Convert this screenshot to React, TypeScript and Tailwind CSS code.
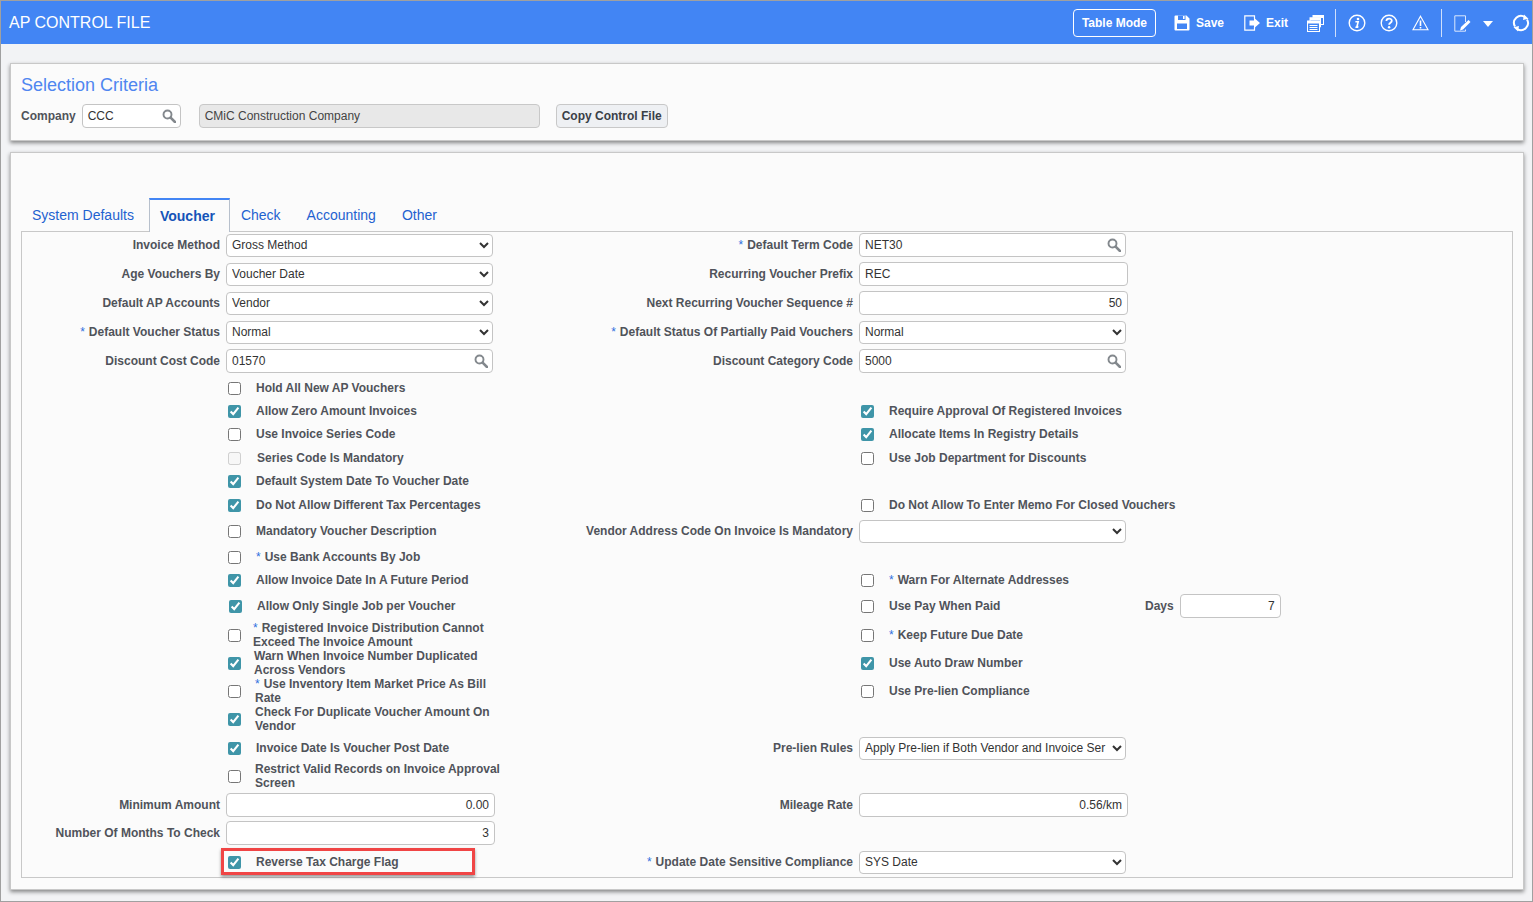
import React from "react";

const font = "font-['Liberation_Sans',Arial,sans-serif]";

function SearchIcon() {
  return (
    <svg width="14" height="14" viewBox="0 0 14 14" className="shrink-0">
      <circle cx="5.5" cy="5.5" r="4" fill="none" stroke="#83888d" strokeWidth="1.9" />
      <path d="M8.6 8.6 L13 13" stroke="#83888d" strokeWidth="2.6" strokeLinecap="round" />
    </svg>
  );
}

function Req() {
  return <span className="mr-[4px] font-normal text-[#2f6fde]">*</span>;
}

function Label({ text, req, w = "w-auto" }: { text: string; req?: boolean; w?: string }) {
  return (
    <label className={`${w} text-right font-bold text-[12px] leading-[14px] text-[#50535a] whitespace-nowrap`}>
      {req && <Req />}
      {text}
    </label>
  );
}

function Sel({ value, w = "w-[267px]" }: { value: string; w?: string }) {
  return (
    <select
      defaultValue={value}
      className={`${w} h-[23px] shrink-0 border border-[#c4c4c4] rounded-[4px] bg-white pl-[1px] pr-0 text-[12px] text-[#333]`}
    >
      <option value={value}>{value}</option>
    </select>
  );
}

function Text({ value, w = "w-[269px]", right, search }: { value: string; w?: string; right?: boolean; search?: boolean }) {
  return (
    <div className={`${w} h-[24px] shrink-0 flex items-center justify-between border border-[#c4c4c4] rounded-[4px] bg-white pl-[5px] ${search ? "pr-[4px]" : "pr-[5px]"} text-[12px] text-[#333]`}>
      <span className={right ? "w-full text-right" : ""}>{value}</span>
      {search && <SearchIcon />}
    </div>
  );
}

function Check({ checked, disabled, label, req, ml = "ml-[15px]", w, box = "" }: { checked?: boolean; disabled?: boolean; label: string; req?: boolean; ml?: string; w?: string; box?: string }) {
  return (
    <div className="flex items-center">
      <input
        type="checkbox"
        defaultChecked={checked}
        disabled={disabled}
        className={`mt-[2px] mb-0 mr-0 w-[13px] h-[13px] shrink-0 accent-[#3f95a8] ${box || "ml-0"}`}
      />
      <span className={`${ml} ${w ?? "whitespace-nowrap"} font-bold text-[12px] leading-[14px] text-[#50535a]`}>
        {req && <Req />}
        {label}
      </span>
    </div>
  );
}

function LeftField({ label, req, children }: { label: string; req?: boolean; children: React.ReactNode }) {
  return (
    <div className="flex items-center h-[23px]">
      <div className="w-[198px] flex justify-end">
        <Label text={label} req={req} />
      </div>
      <div className="ml-[6px]">{children}</div>
    </div>
  );
}

function RightField({ label, req, children }: { label: string; req?: boolean; children: React.ReactNode }) {
  return (
    <div className="flex items-center h-[23px]">
      <div className="w-[348px] flex justify-end">
        <Label text={label} req={req} />
      </div>
      <div className="ml-[6px]">{children}</div>
    </div>
  );
}

function LeftCheck(props: React.ComponentProps<typeof Check>) {
  return (
    <div className="h-[23px] flex items-center pl-[206px]">
      <Check {...props} />
    </div>
  );
}

function RightCheck(props: React.ComponentProps<typeof Check>) {
  return (
    <div className="h-[23px] flex items-center pl-[356px]">
      <Check {...props} />
    </div>
  );
}

function Row({ h, left, right }: { h: string; left?: React.ReactNode; right?: React.ReactNode }) {
  return (
    <div className={`${h} grid grid-cols-[483px_1fr]`}>
      <div>{left}</div>
      <div>{right}</div>
    </div>
  );
}

function ToolbarIcons() {
  return (
    <div className="flex items-center h-full pt-[1px]">
      <button className="h-[28px] w-[83px] border border-white rounded-[4px] text-white font-bold text-[12px]">Table Mode</button>
      {/* save */}
      <svg width="16" height="16" viewBox="0 0 16 16" className="ml-[18px]">
        <path d="M0.5 1.5 a1 1 0 0 1 1-1 H12.5 L15.5 3.5 V14.5 a1 1 0 0 1-1 1 H1.5 a1 1 0 0 1-1-1 Z" fill="white" />
        <rect x="4" y="0.5" width="7.5" height="4.5" fill="#4285f4" />
        <rect x="9" y="1" width="1.6" height="3" fill="white" />
        <rect x="3" y="8.5" width="10" height="5.5" fill="#4285f4" />
      </svg>
      <span className="ml-[6px] text-white font-bold text-[12px]">Save</span>
      {/* exit */}
      <svg width="17" height="16" viewBox="0 0 17 16" className="ml-[20px]">
        <path d="M10.5 4 V0.8 H0.8 V15.2 H10.5 V12" fill="none" stroke="white" strokeWidth="1.2" />
        <path d="M5.5 5.5 H10 V2.8 L16 8 L10 13.2 V10.5 H5.5 Z" fill="white" />
      </svg>
      <span className="ml-[5px] text-white font-bold text-[12px]">Exit</span>
      {/* stacked documents */}
      <svg width="17" height="17" viewBox="0 0 17 17" className="ml-[19px]">
        <rect x="6" y="0.5" width="10.5" height="9" fill="#4285f4" stroke="white" />
        <rect x="6" y="0.5" width="10.5" height="2.5" fill="white" />
        <rect x="3" y="2.8" width="10.5" height="9" fill="#4285f4" stroke="white" />
        <rect x="3" y="2.8" width="10.5" height="2.5" fill="white" />
        <rect x="0.5" y="6" width="12" height="10.5" fill="#4285f4" stroke="white" />
        <rect x="0.5" y="6" width="12" height="2.5" fill="white" />
        <path d="M2.5 10.5 H10.5 M2.5 12.5 H10.5 M2.5 14.5 H10.5" stroke="white" />
      </svg>
      <div className="ml-[11px] w-px h-[28px] bg-[#cfdffb]" />
      {/* info */}
      <svg width="18" height="18" viewBox="0 0 18 18" className="ml-[12px]">
        <circle cx="9" cy="9" r="7.8" fill="none" stroke="white" strokeWidth="1.4" />
        <circle cx="10" cy="5" r="1.3" fill="white" />
        <path d="M7.4 7.8 H10.2 L8.9 12.6 H10.4 M7.4 13.2 H10.2" fill="none" stroke="white" strokeWidth="1.6" />
      </svg>
      {/* help */}
      <svg width="18" height="18" viewBox="0 0 18 18" className="ml-[14px]">
        <circle cx="9" cy="9" r="7.8" fill="none" stroke="white" strokeWidth="1.4" />
        <path d="M6.4 7 C6.4 3.8 11.8 3.8 11.8 6.8 C11.8 8.8 9.1 8.6 9.1 10.8" fill="none" stroke="white" strokeWidth="1.8" />
        <circle cx="9.1" cy="13.2" r="1.2" fill="white" />
      </svg>
      {/* warning */}
      <svg width="17" height="16" viewBox="0 0 17 16" className="ml-[14px]">
        <path d="M8.5 1.2 L16 14.8 H1 Z" fill="none" stroke="white" strokeWidth="1.1" />
        <path d="M8.5 5.5 V11 M8.5 12 V13.6" stroke="white" strokeWidth="1.6" />
      </svg>
      <div className="ml-[12px] w-px h-[28px] bg-[#cfdffb]" />
      {/* edit doc */}
      <svg width="17" height="17" viewBox="0 0 17 17" className="ml-[12px]">
        <path d="M11.5 7 V0.8 H0.8 V16.2 H11.5 V14.5" fill="none" stroke="#dbe7fd" strokeWidth="1" />
        <path d="M6 15.5 L7 12 L14.5 5 L16.5 7 L9 14.5 Z" fill="white" />
      </svg>
      {/* caret */}
      <svg width="10" height="6" viewBox="0 0 10 6" className="ml-[12px] mt-[2px]">
        <path d="M0 0 H10 L5 6 Z" fill="white" />
      </svg>
      {/* refresh */}
      <svg width="18" height="18" viewBox="0 0 18 18" className="ml-[19px]">
        <path d="M3 12.5 A7 7 0 0 1 13 3.2" fill="none" stroke="white" strokeWidth="2" />
        <path d="M15 5.5 A7 7 0 0 1 5 14.8" fill="none" stroke="white" strokeWidth="2" />
        <path d="M12 0.5 L16.5 4.8 L11 6 Z" fill="white" />
        <path d="M6 17.5 L1.5 13.2 L7 12 Z" fill="white" />
      </svg>
    </div>
  );
}

export default function App() {
  return (
    <div className={`${font} w-[1533px] h-[902px] overflow-hidden bg-[#f2f3f5] border border-[#a0a0a0]`}>
      <header className="h-[43px] bg-[#4285f4] flex items-center justify-between pl-[8px] pr-[2px]">
        <h1 className="text-white text-[16px] leading-[42px] font-normal">AP CONTROL FILE</h1>
        <ToolbarIcons />
      </header>

      <section className="mt-[19px] ml-[9px] mr-[8px] h-[78px] bg-[#fbfbfb] border border-[#c8c8c8] shadow-[0_2px_4px_rgba(0,0,0,0.45)] px-[10px] pt-[11px]">
        <h2 className="text-[#4f86f0] text-[18px] leading-[20px] font-normal">Selection Criteria</h2>
        <div className="mt-[9px] flex items-center">
          <span className="font-bold text-[12px] text-[#50535a]">Company</span>
          <div className="ml-[6px] w-[99px] h-[24px] flex items-center justify-between border border-[#c4c4c4] rounded-[4px] bg-white pl-[5px] pr-[4px] text-[12px] text-[#333]">
            <span>CCC</span>
            <SearchIcon />
          </div>
          <div className="ml-[18px] w-[341px] h-[24px] flex items-center border border-[#c8c8c8] rounded-[4px] bg-[#e8e8e8] px-[5px] text-[12px] text-[#444]">
            CMiC Construction Company
          </div>
          <button className="ml-[16px] w-[112px] h-[24px] border border-[#c8c8c8] rounded-[4px] bg-[#eef0f3] font-bold text-[12px] text-[#3a3f47]">
            Copy Control File
          </button>
        </div>
      </section>

      <section className="mt-[11px] ml-[9px] mr-[8px] h-[738px] bg-[#fbfbfb] border border-[#c8c8c8] shadow-[0_2px_4px_rgba(0,0,0,0.45)] px-[10px] pt-[45px]">
        <div className="flex items-end h-[33px] pl-[1px] text-[14px] text-[#1f62d0]">
          <a className="pl-[10px] pr-[15px] leading-[32px]">System Defaults</a>
          <a className="relative z-10 -mb-px h-[34px] pl-[10px] pr-[14px] leading-[32px] font-bold border-t-[2px] border-t-[#4285f4] border-x border-x-[#b7c0cc] bg-[#fbfbfb] text-[#1553b8]">Voucher</a>
          <a className="px-[11px] leading-[32px]">Check</a>
          <a className="px-[15px] leading-[32px]">Accounting</a>
          <a className="px-[11px] leading-[32px]">Other</a>
        </div>

        <div className="h-[647px] border border-[#c8c8c8] pt-[1px]">
          <Row h="h-[29px]" left={<LeftField label="Invoice Method"><Sel value="Gross Method" /></LeftField>} right={<RightField label="Default Term Code" req><Text value="NET30" w="w-[267px]" search /></RightField>} />
          <Row h="h-[29px]" left={<LeftField label="Age Vouchers By"><Sel value="Voucher Date" /></LeftField>} right={<RightField label="Recurring Voucher Prefix"><Text value="REC" /></RightField>} />
          <Row h="h-[29px]" left={<LeftField label="Default AP Accounts"><Sel value="Vendor" /></LeftField>} right={<RightField label="Next Recurring Voucher Sequence #"><Text value="50" right /></RightField>} />
          <Row h="h-[29px]" left={<LeftField label="Default Voucher Status" req><Sel value="Normal" /></LeftField>} right={<RightField label="Default Status Of Partially Paid Vouchers" req><Sel value="Normal" /></RightField>} />
          <Row h="h-[27px]" left={<LeftField label="Discount Cost Code"><Text value="01570" w="w-[267px]" search /></LeftField>} right={<RightField label="Discount Category Code"><Text value="5000" w="w-[267px]" search /></RightField>} />
          <Row h="h-[23px]" left={<LeftCheck label="Hold All New AP Vouchers" />} />
          <Row h="h-[23px]" left={<LeftCheck checked label="Allow Zero Amount Invoices" />} right={<RightCheck checked label="Require Approval Of Registered Invoices" />} />
          <Row h="h-[24px]" left={<LeftCheck label="Use Invoice Series Code" />} right={<RightCheck checked label="Allocate Items In Registry Details" />} />
          <Row h="h-[23px]" left={<LeftCheck disabled label="Series Code Is Mandatory" ml="ml-[16px]" />} right={<RightCheck label="Use Job Department for Discounts" />} />
          <Row h="h-[24px]" left={<LeftCheck checked label="Default System Date To Voucher Date" />} />
          <Row h="h-[26px]" left={<LeftCheck checked label="Do Not Allow Different Tax Percentages" />} right={<RightCheck label="Do Not Allow To Enter Memo For Closed Vouchers" />} />
          <Row h="h-[26px]" left={<LeftCheck label="Mandatory Voucher Description" />} right={<RightField label="Vendor Address Code On Invoice Is Mandatory"><Sel value="" /></RightField>} />
          <Row h="h-[23px]" left={<LeftCheck label="Use Bank Accounts By Job" req />} />
          <Row h="h-[26px]" left={<LeftCheck checked label="Allow Invoice Date In A Future Period" />} right={<RightCheck req label="Warn For Alternate Addresses" />} />
          <Row
            h="h-[29px]"
            left={<LeftCheck checked label="Allow Only Single Job per Voucher" box="ml-[1px]" />}
            right={
              <div className="h-[23px] flex items-center">
                <div className="w-[285px] pl-[356px] shrink-0">
                  <Check label="Use Pay When Paid" />
                </div>
                <span className="ml-[284px] font-bold text-[12px] text-[#50535a]">Days</span>
                <div className="ml-[6px]">
                  <Text value="7" w="w-[101px]" right />
                </div>
              </div>
            }
          />
          <Row h="h-[28px]" left={<LeftCheck req label="Registered Invoice Distribution Cannot Exceed The Invoice Amount" ml="ml-[12px]" w="w-[240px]" />} right={<RightCheck req label="Keep Future Due Date" />} />
          <Row h="h-[28px]" left={<LeftCheck checked label="Warn When Invoice Number Duplicated Across Vendors" ml="ml-[13px]" w="w-[240px]" />} right={<RightCheck checked label="Use Auto Draw Number" />} />
          <Row h="h-[28px]" left={<LeftCheck req label="Use Inventory Item Market Price As Bill Rate" ml="ml-[14px]" w="w-[240px]" />} right={<RightCheck label="Use Pre-lien Compliance" />} />
          <Row h="h-[29px]" left={<LeftCheck checked label="Check For Duplicate Voucher Amount On Vendor" ml="ml-[14px]" w="w-[240px]" />} />
          <Row h="h-[28px]" left={<LeftCheck checked label="Invoice Date Is Voucher Post Date" />} right={<RightField label="Pre-lien Rules"><Sel value="Apply Pre-lien if Both Vendor and Invoice Ser" /></RightField>} />
          <Row h="h-[29px]" left={<LeftCheck label="Restrict Valid Records on Invoice Approval Screen" ml="ml-[14px]" w="w-[250px]" />} />
          <Row h="h-[28px]" left={<LeftField label="Minimum Amount"><Text value="0.00" right /></LeftField>} right={<RightField label="Mileage Rate"><Text value="0.56/km" right /></RightField>} />
          <Row h="h-[29px]" left={<LeftField label="Number Of Months To Check"><Text value="3" right /></LeftField>} />
          <Row
            h="h-[23px]"
            left={
              <div className="h-[23px] flex items-center pl-[206px]">
                <div className="relative">
                  <Check checked label="Reverse Tax Charge Flag" />
                  <div className="absolute left-[-7px] top-[-6px] w-[254px] h-[27px] border-[3px] border-[#f04545] shadow-[0_2px_3px_rgba(0,0,0,0.4)]" />
                </div>
              </div>
            }
            right={<RightField label="Update Date Sensitive Compliance" req><Sel value="SYS Date" /></RightField>}
          />
        </div>
      </section>
    </div>
  );
}
